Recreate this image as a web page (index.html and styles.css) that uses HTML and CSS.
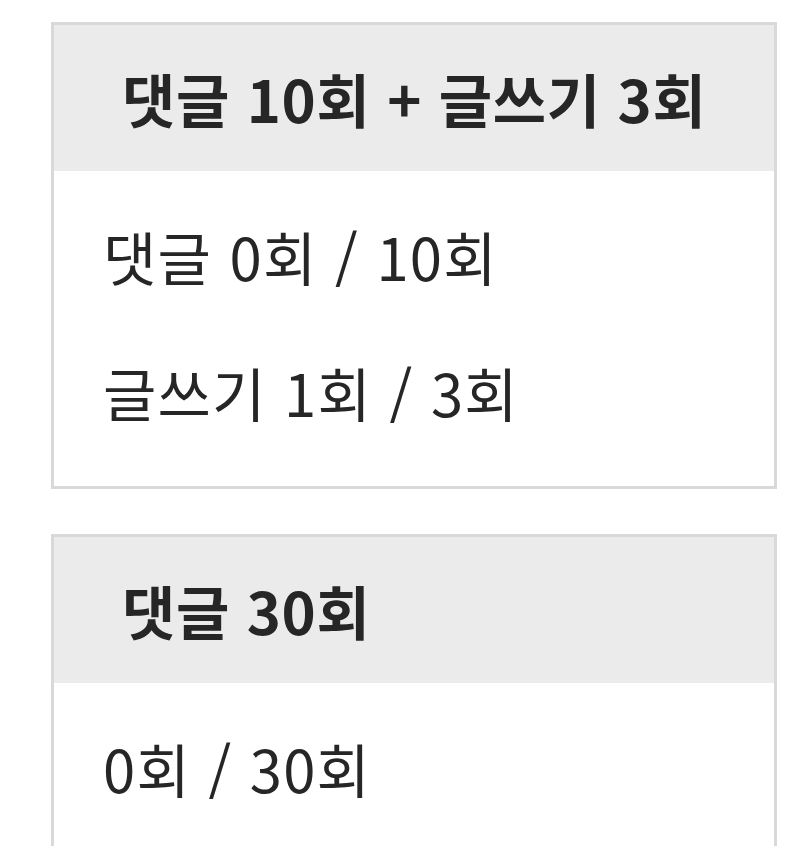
FILE: index.html
```html
<!DOCTYPE html>
<html lang="ko">
<head>
  <meta charset="utf-8" />
  <meta name="viewport" content="width=device-width, initial-scale=1.0" />
  <title>미션 현황</title>
  <link rel="stylesheet" href="styles.css">
</head>
<body>
  <main class="missions">
    <section class="mission">
      <h2 class="mission-title">댓글 10회 + 글쓰기 3회</h2>
      <div class="mission-body">
        <p class="mission-line">댓글 0회 / 10회</p>
        <p class="mission-line">글쓰기 1회 / 3회</p>
      </div>
    </section>

    <section class="mission">
      <h2 class="mission-title">댓글 30회</h2>
      <div class="mission-body">
        <p class="mission-line">0회 / 30회</p>
        <p class="mission-line">&nbsp;</p>
      </div>
    </section>
  </main>
</body>
</html>
```

FILE: styles.css
```css
html, body {
  margin: 0;
  background: #ffffff;
  font-family: "Noto Sans CJK KR", "Noto Sans", sans-serif;
  color: #262626;
}

.missions {
  display: flex;
  flex-direction: column;
  gap: 45px;
  padding: 22px 23px 0 51px;
}

.mission {
  border: 3px solid #d9d9d9;
  background: #ffffff;
}

.mission-title {
  margin: 0;
  height: 146px;
  display: flex;
  align-items: center;
  padding-left: 68px;
  background: #ebebeb;
  font-size: 58px;
  font-weight: 700;
  letter-spacing: 0.6px;
  line-height: 1;
}

.mission-body {
  display: flex;
  flex-direction: column;
  gap: 36px;
  padding: 35px 0 44px 49px;
}

.mission-line {
  margin: 0;
  height: 100px;
  display: flex;
  align-items: center;
  font-size: 58px;
  font-weight: 400;
  letter-spacing: 1.2px;
  line-height: 1;
}
```
